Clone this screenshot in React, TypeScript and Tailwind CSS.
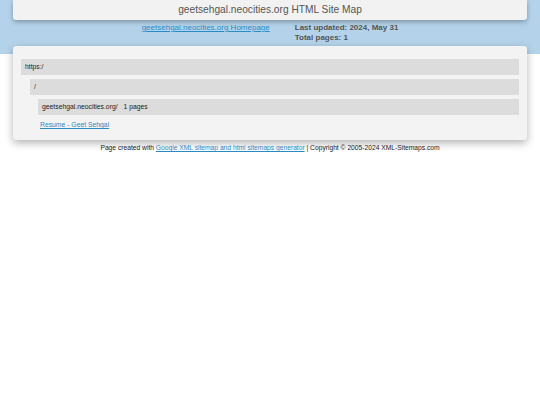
import React from 'react';

const font = { fontFamily: '"Liberation Sans", Arial, sans-serif' };

export default function App() {
  return (
    <div className="min-h-[405px] w-full bg-white text-[#333]" style={font}>
      {/* Top blue band */}
      <div className="h-[54px] bg-[#b4d3ea] px-[13px]">
        <div className="flex h-[20px] items-center justify-center rounded-b-[3px] bg-[#f2f2f2] shadow-[0_2px_5px_rgba(0,0,0,0.3)]">
          <span className="text-[10.2px] text-[#555]">geetsehgal.neocities.org HTML Site Map</span>
        </div>
        <div className="mt-[3px] flex justify-center gap-[25px] text-[8px] leading-[10px]">
          <a href="#" className="text-[#2a8ac4] underline">geetsehgal.neocities.org Homepage</a>
          <div className="font-bold text-[#555]">
            <div>Last updated: 2024, May 31</div>
            <div>Total pages: 1</div>
          </div>
        </div>
      </div>

      {/* Content box */}
      <div className="mx-[13px] -mt-[8px] rounded-[3px] bg-[#f3f3f3] px-[8px] pb-[10px] pt-[13px] shadow-[0_3px_8px_rgba(0,0,0,0.3)]">
        <div className="flex h-[16px] items-center bg-[#dcdcdc] pl-[4px] text-[6.8px] text-[#222]">https:/</div>
        <div className="ml-[9px] mt-[4px]">
          <div className="flex h-[16px] items-center bg-[#dcdcdc] pl-[4px] text-[6.8px] text-[#222]">/</div>
          <div className="ml-[8px] mt-[4px]">
            <div className="flex h-[16px] items-center gap-[6px] bg-[#dcdcdc] pl-[4px] text-[6.8px] text-[#222]">
              <span>geetsehgal.neocities.org/</span>
              <span>1 pages</span>
            </div>
            <div className="mt-[5px] pl-[2px] text-[6.8px] leading-[10px]">
              <a href="#" className="text-[#2a8ac4] underline">Resume - Geet Sehgal</a>
            </div>
          </div>
        </div>
      </div>

      {/* Footer */}
      <div className="mt-[3px] text-center text-[6.7px] text-[#222]">
        Page created with{' '}
        <a href="#" className="text-[#2a8ac4] underline">Google XML sitemap and html sitemaps generator</a>
        {' '}| Copyright © 2005-2024 XML-Sitemaps.com
      </div>
    </div>
  );
}
